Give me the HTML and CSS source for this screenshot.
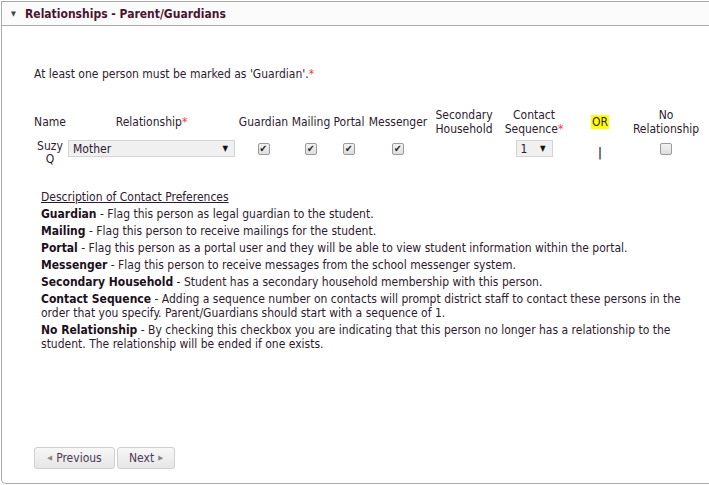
FILE: index.html
```html
<!DOCTYPE html>
<html lang="en">
  <head>
    <meta charset="UTF-8" />
    <title>Relationships - Parent/Guardians</title>
    <link rel="stylesheet" href="styles.css">
  </head>
  <body>
    <div class="panel">
      <!-- header -->
      <div class="panel-head">
        <span class="caret">&#9660;</span>
        <span class="panel-title">Relationships - Parent/Guardians</span>
      </div>

      <div class="panel-body">
        <p class="note">At least one person must be marked as 'Guardian'.<span class="req">*</span></p>

        <!-- relationship grid -->
        <div class="rel-grid">
          <div class="hd">Name</div>
          <div class="hd">Relationship<span class="req">*</span></div>
          <div class="hd">Guardian</div>
          <div class="hd">Mailing</div>
          <div class="hd">Portal</div>
          <div class="hd">Messenger</div>
          <div class="hd">Secondary<br>Household</div>
          <div class="hd">Contact<br>Sequence<span class="req">*</span></div>
          <div class="hd"><span class="or">OR</span></div>
          <div class="hd">No<br>Relationship</div>

          <div class="cell name">Suzy<br>Q</div>
          <div class="cell"><div class="select wide"><span>Mother</span><span class="arrow">&#9660;</span></div></div>
          <div class="cell"><span class="cb checked"></span></div>
          <div class="cell"><span class="cb checked"></span></div>
          <div class="cell"><span class="cb checked"></span></div>
          <div class="cell"><span class="cb checked"></span></div>
          <div class="cell"></div>
          <div class="cell"><div class="select small"><span>1</span><span class="arrow">&#9660;</span></div></div>
          <div class="cell"><span class="bar">|</span></div>
          <div class="cell"><span class="cb"></span></div>
        </div>

        <!-- descriptions -->
        <div class="desc">
          <p class="desc-title">Description of Contact Preferences</p>
          <p><b>Guardian</b> - Flag this person as legal guardian to the student.</p>
          <p><b>Mailing</b> - Flag this person to receive mailings for the student.</p>
          <p><b>Portal</b> - Flag this person as a portal user and they will be able to view student information within the portal.</p>
          <p><b>Messenger</b> - Flag this person to receive messages from the school messenger system.</p>
          <p><b>Secondary Household</b> - Student has a secondary household membership with this person.</p>
          <p><b>Contact Sequence</b> - Adding a sequence number on contacts will prompt district staff to contact these persons in the order that you specify. Parent/Guardians should start with a sequence of 1.</p>
          <p><b>No Relationship</b> - By checking this checkbox you are indicating that this person no longer has a relationship to the student. The relationship will be ended if one exists.</p>
        </div>

        <div class="buttons">
          <a class="btn" href="#"><span class="tri">&#9664;</span> Previous</a>
          <a class="btn" href="#">Next <span class="tri">&#9654;</span></a>
        </div>
      </div>
    </div>
  </body>
</html>
```

FILE: styles.css
```css
* {
  margin: 0px;
  padding: 0px;
  box-sizing: border-box;
}

body {
  font-family: "DejaVu Sans Condensed", "DejaVu Sans", sans-serif;
  font-size: 12px;
  line-height: 14px;
  color: #2e1b30;
  background: #fff;
}

a {
  text-decoration: none;
}

.panel {
  margin: 1px 0 0 1px;
  width: 720px;
  height: 483px;
  border: 1px solid #aaa;
  border-right: none;
  border-bottom-left-radius: 5px;
  display: flex;
  flex-direction: column;
}

.panel-head {
  height: 24px;
  border-bottom: 1px solid #aaa;
  background: #fbfbfb;
  display: flex;
  align-items: center;
  padding-left: 9px;
}

.caret {
  font-size: 7px;
  color: #444;
  width: 14px;
}

.panel-title {
  font-size: 12px;
  font-weight: bold;
  color: #4a1530;
}

.panel-body {
  flex: 1;
  padding: 41px 0 0 32px;
  display: flex;
  flex-direction: column;
}

.req {
  color: #f0404a;
}

.note {
  margin-bottom: 27px;
}

/* grid of relationship columns */
.rel-grid {
  display: grid;
  grid-template-columns: 32px 171px 53px 42px 34px 64px 68px 72px 60px 72px;
  row-gap: 4px;
  text-align: center;
}

.hd {
  align-self: center;
}

.cell {
  display: flex;
  justify-content: center;
  align-items: center;
  height: 17px;
}

.cell.name {
  align-items: flex-start;
  line-height: 13px;
  white-space: nowrap;
}

.or {
  background: #ffff00;
  padding: 0 1px;
}

.select {
  height: 17px;
  background: #f0f0f0;
  border: 1px solid #d4d4d4;
  display: flex;
  align-items: center;
  justify-content: space-between;
  text-align: left;
  padding: 0 6px 0 4px;
  font-size: 12px;
}

.select.wide {
  width: 167px;
}

.select.small {
  width: 37px;
  padding-left: 4px;
}

.select .arrow {
  font-size: 8px;
  color: #111;
}

.cb {
  display: block;
  width: 12px;
  height: 12px;
  border: 1px solid #9a9a9a;
  border-radius: 2px;
  background: linear-gradient(#f2f2f2, #dedede);
  position: relative;
}

.cb.checked::after {
  content: "\2714";
  position: absolute;
  left: 1px;
  top: -1px;
  font-size: 10px;
  line-height: 12px;
  color: #222;
}

.bar {
  font-size: 12px;
  font-weight: bold;
  margin-top: 8px;
  color: #3a1e40;
}

/* description block */
.desc {
  margin: 33px 20px 0 7px;
}

.desc p {
  margin-bottom: 3px;
}

.desc-title {
  text-decoration: underline;
}

.desc b {
  color: #1c1020;
}

.buttons {
  margin-top: auto;
  margin-bottom: 14px;
  display: flex;
  gap: 2px;
}

.btn {
  display: flex;
  align-items: center;
  justify-content: center;
  gap: 4px;
  height: 22px;
  padding: 0 10px;
  border: 1px solid #cfcfcf;
  border-radius: 3px;
  background: linear-gradient(#f7f7f7, #e6e6e6);
  color: #4a3a55;
  font-size: 12px;
}

.btn:first-child {
  width: 81px;
}

.btn:last-child {
  width: 58px;
}

.tri {
  font-size: 7px;
  color: #888;
}
```
